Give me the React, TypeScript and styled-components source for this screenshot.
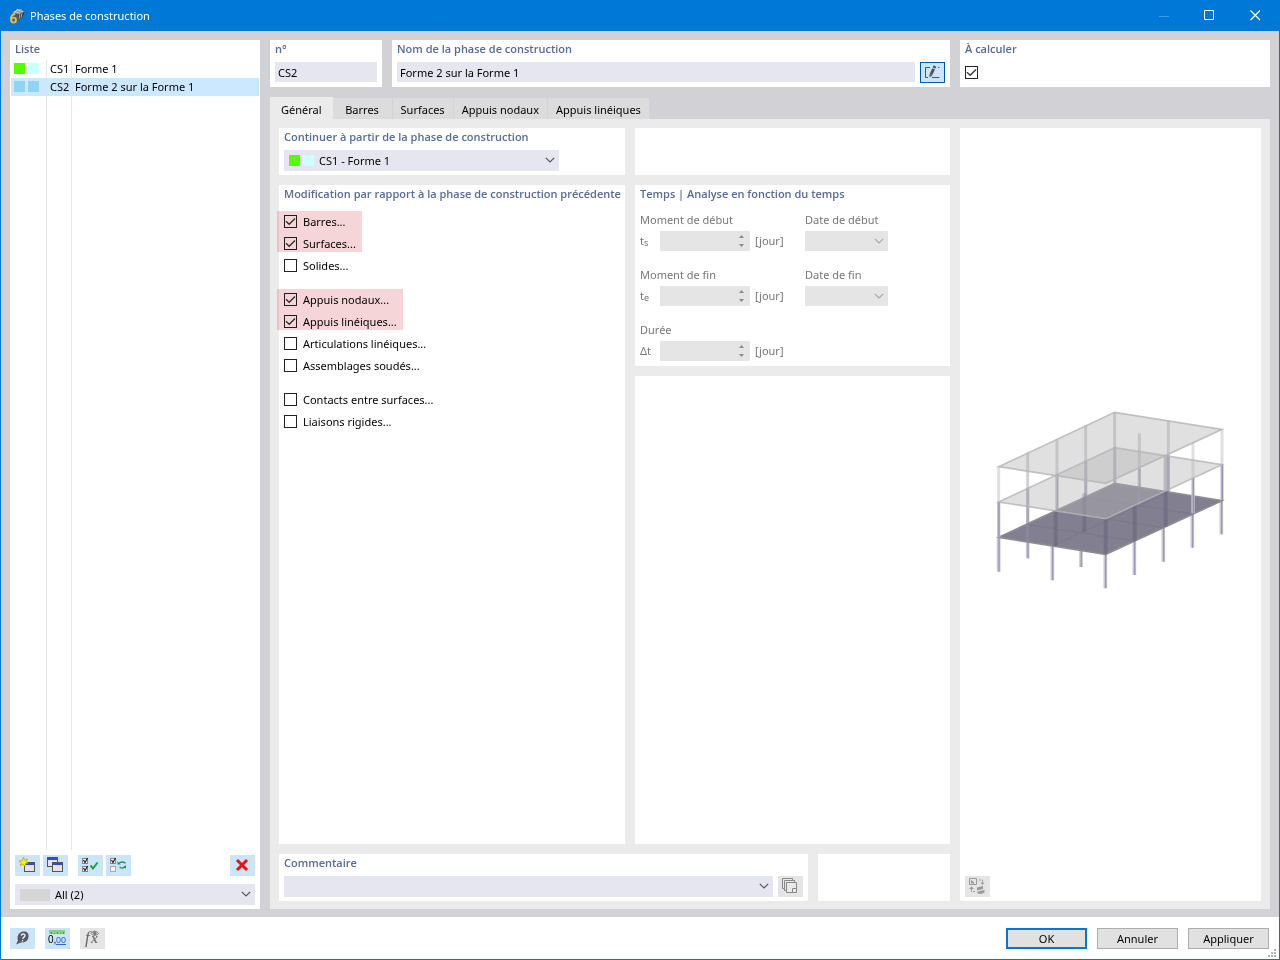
import React, { useState } from "react";
import styled, { createGlobalStyle, css } from "styled-components";

const color = {
  accent: "#0078d7",
  body: "#d1d1d6",
  pane: "#ebebeb",
  tab: "#dcdcdc",
  field: "#e6e6f0",
  disabled: "#e5e5e5",
  tool: "#cce4f7",
  heading: "#5a6a96",
  muted: "#76767a",
  selected: "#cce8ff",
};

const Global = createGlobalStyle`
  * { box-sizing: border-box; }
  body {
    margin: 0;
    background: #fff;
    color: #000;
    font: 11px/18px "Noto Sans", "Open Sans", sans-serif;
  }
  button, input, select { font: inherit; color: inherit; }
`;

const Window = styled.div`
  display: flex;
  flex-direction: column;
  min-height: 100vh;
  border: 1px solid ${color.accent};
  border-top: 0;
`;

const TitleBar = styled.header`
  display: flex;
  align-items: center;
  gap: 5px;
  height: 31px;
  padding-left: 8px;
  background: ${color.accent};
  color: #fff;
`;

const Title = styled.h1`
  flex: 1;
  margin: 0;
  font-size: 11px;
  font-weight: 400;
`;

const WindowButton = styled.button`
  display: grid;
  place-items: center;
  width: 41px;
  height: 31px;
  padding: 0;
  border: 0;
  background: none;
`;

const WindowControls = styled.div`
  display: flex;
  gap: 5px;
  padding-right: 3px;
`;

const Body = styled.main`
  flex: 1;
  display: flex;
  gap: 10px;
  padding: 9px 9px 8px;
  background: ${color.body};
`;

const Panel = styled.section<{ $grow?: boolean }>`
  display: flex;
  flex-direction: column;
  min-width: 0;
  min-height: 47px;
  padding: 0 5px 4px;
  background: #fff;
  ${(p) => p.$grow && css`flex: 1;`}
`;

const ListPanel = styled(Panel)`
  flex: 0 0 250px;
`;

const Heading = styled.h2`
  margin: 0 0 4px;
  font-family: "Open Sans", "Noto Sans", sans-serif;
  font-size: 11px;
  line-height: 18px;
  font-weight: 600;
  color: ${color.heading};
  white-space: nowrap;
`;

const HeadingLabel = styled(Heading).attrs({ as: "label" })`
  display: block;
` as unknown as React.FC<React.LabelHTMLAttributes<HTMLLabelElement>>;

const ListHeading = styled(Heading)`
  margin-bottom: 2px;
`;

const ListArea = styled.div`
  flex: 1;
  margin: 0 -4px 5px;
  background:
    linear-gradient(#e8e8e8, #e8e8e8) 35px 0 / 1px 100% no-repeat,
    linear-gradient(#e8e8e8, #e8e8e8) 60px 0 / 1px 100% no-repeat;
`;

const ListTable = styled.table`
  width: 100%;
  border-collapse: collapse;
  table-layout: fixed;
`;

const ListRow = styled.tr<{ $selected?: boolean }>`
  height: 18px;
  background: ${(p) => (p.$selected ? color.selected : "transparent")};
`;

const ListCell = styled.td<{ $width?: number }>`
  padding: 0 0 0 3px;
  width: ${(p) => (p.$width ? p.$width + "px" : "auto")};
  white-space: nowrap;
`;

const Swatches = styled.span`
  display: flex;
  gap: 3px;
`;

const RowSwatches = styled(Swatches)`
  padding-bottom: 2px;
`;

const Swatch = styled.span<{ $color: string; $wide?: boolean }>`
  width: ${(p) => (p.$wide ? 30 : 11)}px;
  height: ${(p) => (p.$wide ? 12 : 11)}px;
  background: ${(p) => p.$color};
`;

const Toolbar = styled.div`
  display: flex;
  gap: 3px;
  margin-bottom: 8px;
`;

const ToolGroup = styled.div<{ $end?: boolean }>`
  display: flex;
  gap: 3px;
  margin-right: ${(p) => (p.$end ? 0 : 7)}px;
  margin-left: ${(p) => (p.$end ? "auto" : 0)};
`;

const ToolButton = styled.button<{ $framed?: boolean }>`
  display: grid;
  place-items: center;
  flex: none;
  width: 25px;
  height: 21px;
  padding: 0;
  border: ${(p) => (p.$framed ? "1px solid #0058a8" : "0")};
  background: ${color.tool};
  &:disabled { background: ${color.disabled}; }
  svg { overflow: visible; }
`;

const Field = styled.input`
  flex: 1;
  width: 100%;
  min-width: 0;
  height: 20px;
  padding: 0 3px;
  border: 0;
  background: ${color.field};
  &:disabled { background: ${color.disabled}; }
`;

const FieldRow = styled.div`
  display: flex;
  gap: 5px;
`;

const SelectBox = styled.div<{ $width?: number }>`
  position: relative;
  flex: ${(p) => (p.$width ? "none" : "1")};
  width: ${(p) => (p.$width ? p.$width + "px" : "auto")};
  max-width: 100%;
`;

const Select = styled.select<{ $indent?: number }>`
  display: block;
  appearance: none;
  width: 100%;
  height: 21px;
  padding: 0 20px 0 ${(p) => p.$indent ?? 3}px;
  border: 0;
  border-radius: 0;
  background: ${color.field};
  &:disabled { height: 20px; background: ${color.disabled}; opacity: 1; }
`;

const SelectAdornment = styled.span<{ $end?: boolean }>`
  position: absolute;
  top: 0;
  bottom: 0;
  ${(p) => (p.$end ? "right: 4px;" : "left: 5px;")}
  display: flex;
  align-items: center;
  pointer-events: none;
`;

const ListFooter = styled.div`
  flex: none;
`;

const Content = styled.div`
  flex: 1;
  min-width: 0;
  display: flex;
  flex-direction: column;
`;

const HeaderRow = styled.div`
  display: grid;
  grid-template-columns: 112px 1fr 310px;
  gap: 10px;
  margin-bottom: 10px;
`;

const TabBar = styled.nav`
  display: flex;
  align-items: flex-end;
  height: 22px;
`;

const Tab = styled.button<{ $active?: boolean }>`
  min-width: 60px;
  height: ${(p) => (p.$active ? 22 : 21)}px;
  padding: ${(p) => (p.$active ? "4px 10px 0 11px" : "3px 8px 0")};
  border: 0;
  border-right: 1px solid ${(p) => (p.$active ? color.pane : "#d4d4d4")};
  background: ${(p) => (p.$active ? color.pane : color.tab)};
`;

const Pane = styled.div`
  flex: 1;
  display: grid;
  grid-template-columns: 1fr 301px;
  gap: 10px;
  padding: 9px 9px 8px;
  background: ${color.pane};
`;

const PaneLeft = styled.div`
  display: flex;
  flex-direction: column;
  gap: 10px;
  min-width: 0;
`;

const Columns = styled.div<{ $grow?: boolean }>`
  display: grid;
  grid-template-columns: 346fr 315fr;
  gap: 10px;
  ${(p) => p.$grow && css`flex: 1;`}
`;

const Stack = styled.div`
  display: flex;
  flex-direction: column;
  gap: 10px;
  min-width: 0;
`;

const BottomRow = styled.div`
  display: grid;
  grid-template-columns: 1fr 132px;
  gap: 10px;
`;

const CheckGroups = styled.div`
  display: flex;
  flex-direction: column;
  align-items: flex-start;
  gap: 12px;
  padding-top: 4px;
`;

const CheckGroup = styled.div`
  display: flex;
  flex-direction: column;
  align-items: flex-start;
`;

const Marked = styled.div`
  position: relative;
  &::after {
    content: "";
    position: absolute;
    inset: 0 -6px 3px -7px;
    background: #f6d5d8;
    mix-blend-mode: multiply;
    pointer-events: none;
  }
`;

const CheckLabel = styled.label`
  display: flex;
  align-items: center;
  gap: 6px;
  height: 22px;
  white-space: nowrap;
`;

const checkMark =
  "url(\"data:image/svg+xml,%3Csvg xmlns='http://www.w3.org/2000/svg' viewBox='0 0 11 11'%3E%3Cpath d='M1 5.2 4.2 8.3 10 2.5' fill='none' stroke='%23333' stroke-width='1.3'/%3E%3C/svg%3E\")";

const Checkbox = styled.input.attrs({ type: "checkbox" })`
  appearance: none;
  flex: none;
  width: 13px;
  height: 13px;
  margin: 0 0 1px;
  border: 1px solid #222;
  background: #fff;
  &:checked { background: #fff ${checkMark} center / 11px 11px; }
`;

const CheckSlot = styled.div`
  display: flex;
  padding-top: 4px;
`;

const TimeGrid = styled.div`
  display: grid;
  grid-template-columns: 155px 1fr;
  gap: 15px 10px;
  padding: 4px 0 1px;
  color: ${color.muted};
`;

const TimeCell = styled.div`
  display: flex;
  flex-direction: column;
  gap: 2px;
`;

const TimeRow = styled.div`
  display: flex;
  align-items: center;
  gap: 5px;
  height: 20px;
`;

const Symbol = styled.span`
  width: 15px;
`;

const Sub = styled.sub`
  font-size: 9px;
  line-height: 1;
  vertical-align: -1px;
`;

const SpinBox = styled.div`
  position: relative;
  display: flex;
  width: 90px;
`;

const PreviewPanel = styled(Panel)`
  justify-content: space-between;
`;

const Preview = styled.div`
  flex: 1;
  display: grid;
  place-items: center;
`;

const Footer = styled.footer`
  position: relative;
  display: flex;
  align-items: center;
  gap: 10px;
  height: 42px;
  padding: 0 10px 0 9px;
  background: #fff;
`;

const FooterButtons = styled.div`
  display: flex;
  gap: 10px;
  margin-left: auto;
`;

const PushButton = styled.button<{ $primary?: boolean }>`
  width: 81px;
  height: 21px;
  padding: 0;
  line-height: 17px;
  background: #e1e1e1;
  border: ${(p) => (p.$primary ? "2px solid " + color.accent : "1px solid #adadad")};
`;

const Grip = styled.svg`
  position: absolute;
  right: 2px;
  bottom: 1px;
`;

const Chevron = ({ muted }: { muted?: boolean }) => (
  <svg width="10" height="7" viewBox="0 0 10 7" fill="none" stroke={muted ? "#a8a8a8" : "#555"} strokeWidth="1.2">
    <path d="M.8.8 5 5 9.2.8" />
  </svg>
);

const AppIcon = () => (
  <svg width="16" height="16" viewBox="0 0 16 16">
    <path d="M3 5 8 1 12 1 15.500 4 14 8 9 13 5 10Z" fill="#4c5864" />
    <path d="M3 5 8 1 12 1 15.500 4 10 6Z" fill="#8d98a3" />
    <path d="M10 6 15.500 4 14 8 9 13Z" fill="#2f3944" />
    <path d="M5 3.500 11.500 5.300M8 1.500 14 4M11 6 10 11.500M13 5.300 12 9.500M9 1 4 6" stroke="#dbe2e8" strokeWidth=".7" />
    <path d="M6.200 6.300C3.600 6 2 8 2 11c0 2.300 1 3.600 2.500 3.600S7 13.600 7 12s-.9-2.400-2.100-2.400S2.800 10.300 2.200 11.300" fill="none" stroke="#f5b921" strokeWidth="1.900" />
  </svg>
);

const WindowShape = ({ x, y }: { x: number; y: number }) => (
  <g>
    <rect x={x + 0.5} y={y + 0.5} width="10" height="9" fill="#e4e4e4" stroke="#555" />
    <rect x={x + 1} y={y + 1} width="9" height="2" fill="#3048e0" />
  </g>
);

const NewIcon = () => (
  <svg width="17" height="17" viewBox="0 0 17 17">
    <WindowShape x={5} y={5} />
    <path d="M4.500 0 5.500 3.200 8.500 2 7.200 4.700 9.200 6.200 6.500 6.600 6 9.500 4.200 7.200 1.200 8.500 2.300 5.700 0 4 3.200 3.500Z" fill="#fff200" stroke="#a59a00" strokeWidth=".6" />
  </svg>
);

const CopyIcon = () => (
  <svg width="17" height="17" viewBox="0 0 17 17">
    <WindowShape x={0} y={0} />
    <WindowShape x={5} y={5} />
  </svg>
);

const SmallBox = ({ y, on }: { y: number; on?: boolean }) => (
  <g fill="none">
    <rect x=".5" y={y + 0.5} width="5" height="5" fill="#f0f4f8" stroke={on ? "#888" : "#aaa"} />
    {on && <path d={`M1.500 ${y + 2}l1.500 2.500 2.500-4.500`} stroke="#222" strokeWidth="1.200" />}
  </g>
);

const CheckAllIcon = () => (
  <svg width="17" height="17" viewBox="0 0 17 17">
    <SmallBox y={1} on />
    <SmallBox y={9} on />
    <path d="M8.500 8.500 11 11.500 15.500 5.500" fill="none" stroke="#13a538" strokeWidth="2" />
  </svg>
);

const InvertIcon = () => (
  <svg width="17" height="17" viewBox="0 0 17 17">
    <SmallBox y={1} on />
    <SmallBox y={9} />
    <path d="M9 6.300C11 4.500 13.500 4.800 15.500 6.300M15 9.800C13.500 11.500 11.500 11.300 9.500 10" fill="none" stroke="#169b48" strokeWidth="1.300" />
    <path d="M7.500 4.300v3.200h3.300ZM16 11.500V8.300l-3.200 2Z" fill="#169b48" />
  </svg>
);

const DeleteIcon = () => (
  <svg width="15" height="13" viewBox="0 0 15 13">
    <path d="M2 1 12 11M12 1 2 11" stroke="#f01010" strokeWidth="3" />
  </svg>
);

const EditIcon = () => (
  <svg width="17" height="15" viewBox="0 0 17 15" fill="none" stroke="#555">
    <path d="M6 2.500H1.500v10H4M8 12.500h7.500M14 2.500h1.500" />
    <path d="M11 1 10 3M9.600 3.800 7 9.500" strokeWidth="3" />
    <path d="M5.500 9 8.500 10.300 5.500 12.500Z" fill="#555" stroke="none" />
  </svg>
);

const PagesIcon = () => (
  <svg width="15" height="15" viewBox="0 0 15 15" fill="#e9e9e9" stroke="#888">
    <path d="M-.5-.5h10v10h-10Z" />
    <path d="M1.500 1.500h10v10h-10Z" />
    <path d="M3.500 3.500h10v10h-10Z" />
    <path d="M9.500 13.500v-4h4" />
  </svg>
);

const ConvertIcon = () => (
  <svg width="17" height="17" viewBox="0 0 17 17" fill="none" stroke="#999">
    <path d="M.5.500h7v6h-7Z" />
    <path d="M2.500 5V2.500L5 5Z" fill="#999" />
    <path d="M10 2h3.500v3" strokeDasharray="2 1" />
    <path d="M11.500 4.500h4l-2 2.500ZM0 11 2.500 8.500 5 11Z" fill="#999" stroke="none" />
    <path d="M2.500 11v2.500H6" strokeDasharray="3 1" />
    <path d="M8 9.500 14 8v3l-6 1.500ZM8.500 13.500 15.500 12v2.500c-2 1.500-4.500 1.500-7 1Z" fill="#999" stroke="none" />
  </svg>
);

const HelpIcon = () => (
  <svg width="15" height="15" viewBox="0 0 15 15">
    <path d="M8.500.5C12 .3 14 2.300 13.500 6 13 9.700 10 12 6.500 11.300L1 13.500 3 9.500C1.500 5 4 .8 8.500.5Z" fill="#555b61" />
    <path d="M6.200 4.700C6.500 2.500 10.300 2.500 10 4.700 9.800 6.200 8 6 7.800 8M7.600 9l-.2 1.400" fill="none" stroke="#e6eef5" strokeWidth="1.400" />
  </svg>
);

const UnitsIcon = () => (
  <svg width="17" height="17" viewBox="0 0 17 17">
    <rect x="0" y="0" width="16" height="4" fill="#87d37c" />
    <path d="M2.500 2v2M5.500 3v1M8.500 2v2M11.500 3v1M14.500 2v2" stroke="#4d9a48" />
    <text x="-1" y="13" fontSize="10" fontFamily="Liberation Sans, sans-serif">0,</text>
    <text x="7" y="13" fontSize="9" fontFamily="Liberation Sans, sans-serif" fill="#2b62d9">00</text>
    <path d="M7 14.500h10" stroke="#2b62d9" />
  </svg>
);

const FormulaIcon = () => (
  <svg width="17" height="17" viewBox="0 0 17 17" fill="none" stroke="#777">
    <text x="1" y="13" fontSize="17" fontStyle="italic" fontFamily="Liberation Serif, serif" fill="#666" stroke="none">f</text>
    <text x="7" y="13" fontSize="14" fontStyle="italic" fontWeight="700" fontFamily="Liberation Serif, serif" fill="#777" stroke="none">x</text>
    <path d="M7 3.500C9 .5 12.500.500 14.500 3.500 12.500 6 9 6 7 3.500Z" />
    <circle cx="10.800" cy="3.300" r="1.300" fill="#777" />
  </svg>
);

/* Three slabs seen from above, carried by rows of columns. */
const backColumns = [
  [144, 158], [232, 118], [318, 76], [405, 36], [566, 61], [479, 100],
];
const slabs = [200, 306, 412];
const feet = [
  [57, 412, 515], [144, 425, 475], [218, 438, 541], [304, 452, 501], [377, 463, 565],
  [464, 423, 525], [551, 383, 485], [638, 342, 443], [725, 302, 403],
];

const Building = () => (
  <svg width="260" height="200" viewBox="4 6 780 600" role="img" aria-label="Structure">
    {feet.map(([x, top, bottom]) => (
      <g key={x}>
        <path d={`M${x} ${top}V${bottom}`} stroke="#c9c9d1" strokeWidth="11" />
        <path d={`M${x + 1} ${top}V${bottom}`} stroke="#9a98b8" strokeWidth="4" />
      </g>
    ))}
    <path d="M57 412 405 250 727 302 378 463Z" fill="#817f90" stroke="#8c8c91" strokeWidth="5" />
    <path d="M144 374 465 423M232 333 552 383M318 292 640 342M218 438 566 276" stroke="#706e80" strokeWidth="4" opacity=".35" />
    {backColumns.map(([x, y]) => (
      <g key={x}>
        <path d={`M${x} ${y}v108`} stroke="#b4b4b8" strokeWidth="9" opacity=".6" />
        <path d={`M${x} ${y + 106}v${x === 144 ? 160 : 108}`} stroke="#8f8ea3" strokeWidth="10" opacity=".6" />
        <path d={`M${x + 1} ${y + 106}v108`} stroke="#7674a0" strokeWidth="3" opacity=".5" />
      </g>
    ))}
    {[[57, 200], [727, 88], [640, 128]].map(([x, y]) => (
      <g key={x}>
        <path d={`M${x} ${y}v106`} stroke="#e0e0e4" strokeWidth="9" />
        <path d={`M${x} ${y + 106}v106`} stroke="#c6c6ce" strokeWidth="10" />
        <path d={`M${x + 1} ${y + 106}v106`} stroke="#9290b8" strokeWidth="4" />
      </g>
    ))}
    {[[378, 355, 463], [465, 315, 423], [558, 165, 380], [228, 330, 438], [314, 280, 395]].map(([x, y, end]) => (
      <path key={x} d={`M${x} ${y}V${end}`} stroke="#5d5b73" strokeWidth="12" opacity=".4" />
    ))}
    {slabs.slice(0, 2).reverse().map((y) => (
      <path
        key={y}
        d={`M57 ${y} 405 ${y - 163} 727 ${y - 112} 378 ${y + 50}Z`}
        fill="#b4b4b7"
        fillOpacity=".42"
        stroke="#b4b4b7"
        strokeOpacity=".8"
        strokeWidth="5"
      />
    ))}
  </svg>
);

const tabs = ["Général", "Barres", "Surfaces", "Appuis nodaux", "Appuis linéiques"];

const phases = [
  { id: "CS1", name: "Forme 1", colors: ["#55ff00", "#ccffff"] },
  { id: "CS2", name: "Forme 2 sur la Forme 1", colors: ["#8fd3f5", "#8fd3f5"] },
];

const Check = ({ label, on }: { label: string; on?: boolean }) => (
  <CheckLabel>
    <Checkbox defaultChecked={on} />
    {label}
  </CheckLabel>
);

const TimeField = ({ id, label, symbol, sub }: { id: string; label: string; symbol: string; sub?: string }) => (
  <TimeCell>
    <label htmlFor={id}>{label}</label>
    <TimeRow>
      <Symbol>
        {symbol}
        {sub && <Sub>{sub}</Sub>}
      </Symbol>
      <SpinBox>
        <Field id={id} disabled />
        <SelectAdornment $end>
          <svg width="9" height="14" viewBox="0 0 9 14" fill="#8a8a8a">
            <path d="M2 4 4.500 1 7 4ZM2 10 4.500 13 7 10Z" />
          </svg>
        </SelectAdornment>
      </SpinBox>
      <span>[jour]</span>
    </TimeRow>
  </TimeCell>
);

const DateField = ({ id, label }: { id: string; label: string }) => (
  <TimeCell>
    <label htmlFor={id}>{label}</label>
    <SelectBox $width={83}>
      <Select id={id} disabled />
      <SelectAdornment $end>
        <Chevron muted />
      </SelectAdornment>
    </SelectBox>
  </TimeCell>
);

export default function App() {
  const [active, setActive] = useState(0);
  const [selected, setSelected] = useState("CS2");

  return (
    <>
      <Global />
      <Window>
        <TitleBar>
          <AppIcon />
          <Title>Phases de construction</Title>
          <WindowControls>
            <WindowButton aria-label="Réduire" disabled>
              <svg width="10" height="10"><path d="M0 5.500h10" stroke="#3f9be6" /></svg>
            </WindowButton>
            <WindowButton aria-label="Agrandir">
              <svg width="11" height="11" fill="none" stroke="#fff"><path d="M.5.500h9v9h-9Z" /></svg>
            </WindowButton>
            <WindowButton aria-label="Fermer">
              <svg width="11" height="11" stroke="#fff" strokeWidth="1.200"><path d="M.5.500 10 10M10 .5.500 10" /></svg>
            </WindowButton>
          </WindowControls>
        </TitleBar>

        <Body>
          <ListPanel>
            <ListHeading>Liste</ListHeading>
            <ListArea>
              <ListTable>
                <tbody>
                  {phases.map((p) => (
                    <ListRow key={p.id} $selected={p.id === selected} onClick={() => setSelected(p.id)}>
                      <ListCell $width={36}>
                        <RowSwatches>
                          {p.colors.map((c, i) => <Swatch key={i} $color={c} />)}
                        </RowSwatches>
                      </ListCell>
                      <ListCell $width={25}>{p.id}</ListCell>
                      <ListCell>{p.name}</ListCell>
                    </ListRow>
                  ))}
                </tbody>
              </ListTable>
            </ListArea>
            <ListFooter>
              <Toolbar>
                <ToolGroup>
                  <ToolButton aria-label="Nouveau"><NewIcon /></ToolButton>
                  <ToolButton aria-label="Copier"><CopyIcon /></ToolButton>
                </ToolGroup>
                <ToolGroup>
                  <ToolButton aria-label="Tout sélectionner"><CheckAllIcon /></ToolButton>
                  <ToolButton aria-label="Inverser la sélection"><InvertIcon /></ToolButton>
                </ToolGroup>
                <ToolGroup $end>
                  <ToolButton aria-label="Supprimer"><DeleteIcon /></ToolButton>
                </ToolGroup>
              </Toolbar>
              <SelectBox>
                <Select $indent={40} aria-label="Filtre">
                  <option>All (2)</option>
                </Select>
                <SelectAdornment><Swatch $color="#d6d6d6" $wide /></SelectAdornment>
                <SelectAdornment $end><Chevron /></SelectAdornment>
              </SelectBox>
            </ListFooter>
          </ListPanel>

          <Content>
            <HeaderRow>
              <Panel>
                <HeadingLabel htmlFor="number">n°</HeadingLabel>
                <FieldRow><Field id="number" defaultValue="CS2" /></FieldRow>
              </Panel>
              <Panel>
                <HeadingLabel htmlFor="name">Nom de la phase de construction</HeadingLabel>
                <FieldRow>
                  <Field id="name" defaultValue="Forme 2 sur la Forme 1" />
                  <ToolButton $framed aria-label="Modifier le nom"><EditIcon /></ToolButton>
                </FieldRow>
              </Panel>
              <Panel>
                <HeadingLabel htmlFor="solve">À calculer</HeadingLabel>
                <CheckSlot><Checkbox id="solve" defaultChecked /></CheckSlot>
              </Panel>
            </HeaderRow>

            <TabBar role="tablist">
              {tabs.map((t, i) => (
                <Tab key={t} role="tab" aria-selected={i === active} $active={i === active} onClick={() => setActive(i)}>
                  {t}
                </Tab>
              ))}
            </TabBar>

            <Pane>
              <PaneLeft>
                <Columns>
                  <Panel>
                    <HeadingLabel htmlFor="previous">Continuer à partir de la phase de construction</HeadingLabel>
                    <SelectBox $width={275}>
                      <Select id="previous" $indent={35}>
                        <option>CS1 - Forme 1</option>
                      </Select>
                      <SelectAdornment>
                        <Swatches>
                          {phases[0].colors.map((c) => <Swatch key={c} $color={c} />)}
                        </Swatches>
                      </SelectAdornment>
                      <SelectAdornment $end><Chevron /></SelectAdornment>
                    </SelectBox>
                  </Panel>
                  <Panel />
                </Columns>

                <Columns $grow>
                  <Panel>
                    <Heading>Modification par rapport à la phase de construction précédente</Heading>
                    <CheckGroups>
                      <CheckGroup>
                        <Marked>
                          <Check label="Barres..." on />
                          <Check label="Surfaces..." on />
                        </Marked>
                        <Check label="Solides..." />
                      </CheckGroup>
                      <CheckGroup>
                        <Marked>
                          <Check label="Appuis nodaux..." on />
                          <Check label="Appuis linéiques..." on />
                        </Marked>
                        <Check label="Articulations linéiques..." />
                        <Check label="Assemblages soudés..." />
                      </CheckGroup>
                      <CheckGroup>
                        <Check label="Contacts entre surfaces..." />
                        <Check label="Liaisons rigides..." />
                      </CheckGroup>
                    </CheckGroups>
                  </Panel>
                  <Stack>
                    <Panel>
                      <Heading>Temps | Analyse en fonction du temps</Heading>
                      <TimeGrid>
                        <TimeField id="start" label="Moment de début" symbol="t" sub="s" />
                        <DateField id="start-date" label="Date de début" />
                        <TimeField id="end" label="Moment de fin" symbol="t" sub="e" />
                        <DateField id="end-date" label="Date de fin" />
                        <TimeField id="duration" label="Durée" symbol="Δt" />
                      </TimeGrid>
                    </Panel>
                    <Panel $grow />
                  </Stack>
                </Columns>

                <BottomRow>
                  <Panel>
                    <HeadingLabel htmlFor="comment">Commentaire</HeadingLabel>
                    <FieldRow>
                      <SelectBox>
                        <Select id="comment" />
                        <SelectAdornment $end><Chevron /></SelectAdornment>
                      </SelectBox>
                      <ToolButton disabled aria-label="Bibliothèque de commentaires"><PagesIcon /></ToolButton>
                    </FieldRow>
                  </Panel>
                  <Panel />
                </BottomRow>
              </PaneLeft>

              <PreviewPanel>
                <Preview><Building /></Preview>
                <ToolButton disabled aria-label="Changer l'image"><ConvertIcon /></ToolButton>
              </PreviewPanel>
            </Pane>
          </Content>
        </Body>

        <Footer>
          <ToolButton aria-label="Aide"><HelpIcon /></ToolButton>
          <ToolButton aria-label="Unités et décimales"><UnitsIcon /></ToolButton>
          <ToolButton disabled aria-label="Formule"><FormulaIcon /></ToolButton>
          <FooterButtons>
            <PushButton $primary>OK</PushButton>
            <PushButton>Annuler</PushButton>
            <PushButton>Appliquer</PushButton>
          </FooterButtons>
          <Grip width="9" height="9" fill="#b4b4b4">
            <path d="M6 0h2v2H6ZM3 3h2v2H3ZM6 3h2v2H6ZM0 6h2v2H0ZM3 6h2v2H3ZM6 6h2v2H6Z" />
          </Grip>
        </Footer>
      </Window>
    </>
  );
}
